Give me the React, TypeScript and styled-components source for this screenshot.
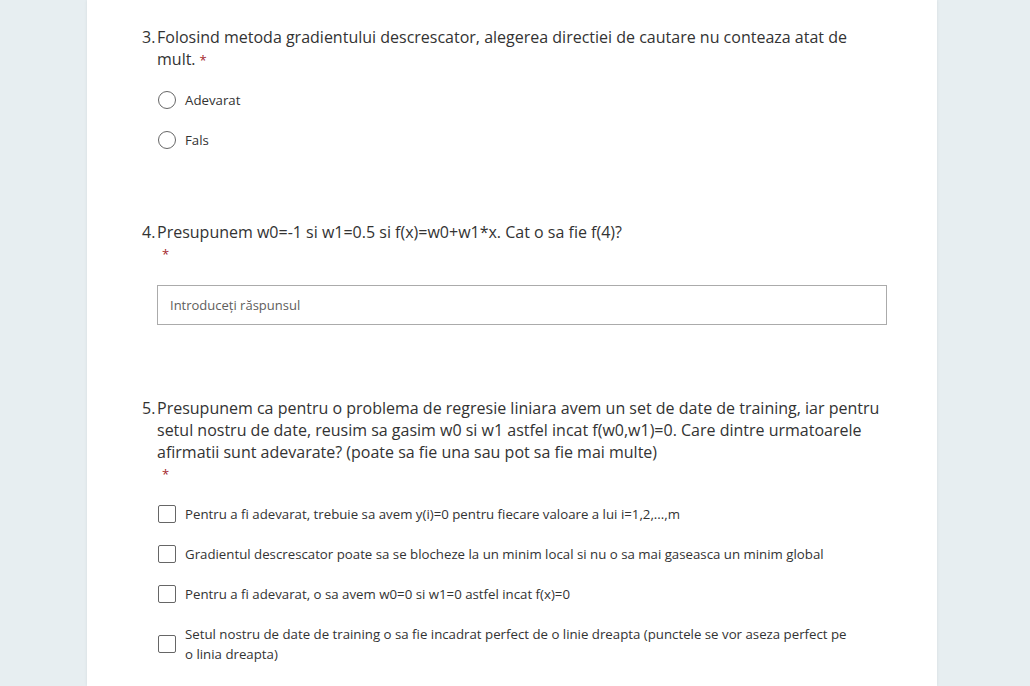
import React from "react";
import styled, { createGlobalStyle } from "styled-components";

const Global = createGlobalStyle`
  html, body { margin: 0; padding: 0; }
  body {
    background: #e7eef1;
    font-family: "Open Sans", "Noto Sans", "Liberation Sans", sans-serif;
    color: #333333;
    font-variant-ligatures: none;
  }
`;

const Page = styled.div`
  display: flex;
  padding-left: 87px;
  height: 686px;
  overflow: hidden;
`;

const Card = styled.main`
  width: 850px;
  box-sizing: border-box;
  background: #ffffff;
  box-shadow: 0 0 3px rgba(0, 0, 0, 0.08);
  padding: 26px 50px 20px 55px;
  display: flex;
  flex-direction: column;
`;

const Question = styled.section<{ $gapAfter: number }>`
  display: flex;
  flex-direction: column;
  margin-bottom: ${(p) => p.$gapAfter}px;
`;

const Title = styled.div`
  display: flex;
  font-size: 16px;
  line-height: 22px;
  color: #333333;
`;

const Num = styled.span`
  flex: 0 0 15px;
`;

const TitleText = styled.div`
  flex: 1;
`;

const Star = styled.span<{ $block?: boolean }>`
  color: #a4262c;
  font-size: 13px;
  display: ${(p) => (p.$block ? "block" : "inline")};
  margin-left: ${(p) => (p.$block ? 5 : 4)}px;
  line-height: 22px;
`;

const Options = styled.div`
  display: flex;
  flex-direction: column;
  margin-top: 9px;
  padding-left: 16px;
`;

const Option = styled.label`
  display: flex;
  align-items: center;
  gap: 9px;
  padding: 10px 0;
  font-size: 13.25px;
  line-height: 20px;
  color: #333333;
  cursor: pointer;
`;

const Radio = styled.span`
  flex: 0 0 auto;
  width: 18px;
  height: 18px;
  box-sizing: border-box;
  border: 1px solid #666666;
  border-radius: 50%;
`;

const Check = styled.span`
  flex: 0 0 auto;
  width: 18px;
  height: 18px;
  box-sizing: border-box;
  border: 1px solid #666666;
  border-radius: 2px;
`;

const OptionText = styled.span`
  max-width: 668px;
`;

const AnswerInput = styled.input`
  margin: 20px 0 0 15px;
  height: 40px;
  box-sizing: border-box;
  border: 1px solid #ababab;
  border-radius: 0;
  padding: 0 12px;
  font-family: inherit;
  font-size: 13px;
  color: #333333;
  outline: none;
  &::placeholder {
    color: #605e5c;
  }
`;

export default function App() {
  return (
    <>
      <Global />
      <Page>
        <Card>
          <Question $gapAfter={61}>
            <Title>
              <Num>3.</Num>
              <TitleText>
                Folosind metoda gradientului descrescator, alegerea directiei de cautare nu conteaza atat de mult.
                <Star>*</Star>
              </TitleText>
            </Title>
            <Options>
              <Option>
                <Radio />
                <OptionText>Adevarat</OptionText>
              </Option>
              <Option>
                <Radio />
                <OptionText>Fals</OptionText>
              </Option>
            </Options>
          </Question>

          <Question $gapAfter={72}>
            <Title>
              <Num>4.</Num>
              <TitleText>
                Presupunem w0=-1 si w1=0.5 si f(x)=w0+w1*x. Cat o sa fie f(4)?
                <Star $block>*</Star>
              </TitleText>
            </Title>
            <AnswerInput placeholder="Introduceți răspunsul" />
          </Question>

          <Question $gapAfter={0}>
            <Title>
              <Num>5.</Num>
              <TitleText>
                Presupunem ca pentru o problema de regresie liniara avem un set de date de training, iar pentru setul nostru de date, reusim sa gasim w0 si w1 astfel incat f(w0,w1)=0. Care dintre urmatoarele afirmatii sunt adevarate? (poate sa fie una sau pot sa fie mai multe)
                <Star $block>*</Star>
              </TitleText>
            </Title>
            <Options>
              <Option>
                <Check />
                <OptionText>Pentru a fi adevarat, trebuie sa avem y(i)=0 pentru fiecare valoare a lui i=1,2,...,m</OptionText>
              </Option>
              <Option>
                <Check />
                <OptionText>Gradientul descrescator poate sa se blocheze la un minim local si nu o sa mai gaseasca un minim global</OptionText>
              </Option>
              <Option>
                <Check />
                <OptionText>Pentru a fi adevarat, o sa avem w0=0 si w1=0 astfel incat f(x)=0</OptionText>
              </Option>
              <Option>
                <Check />
                <OptionText>Setul nostru de date de training o sa fie incadrat perfect de o linie dreapta (punctele se vor aseza perfect pe o linia dreapta)</OptionText>
              </Option>
            </Options>
          </Question>
        </Card>
      </Page>
    </>
  );
}
